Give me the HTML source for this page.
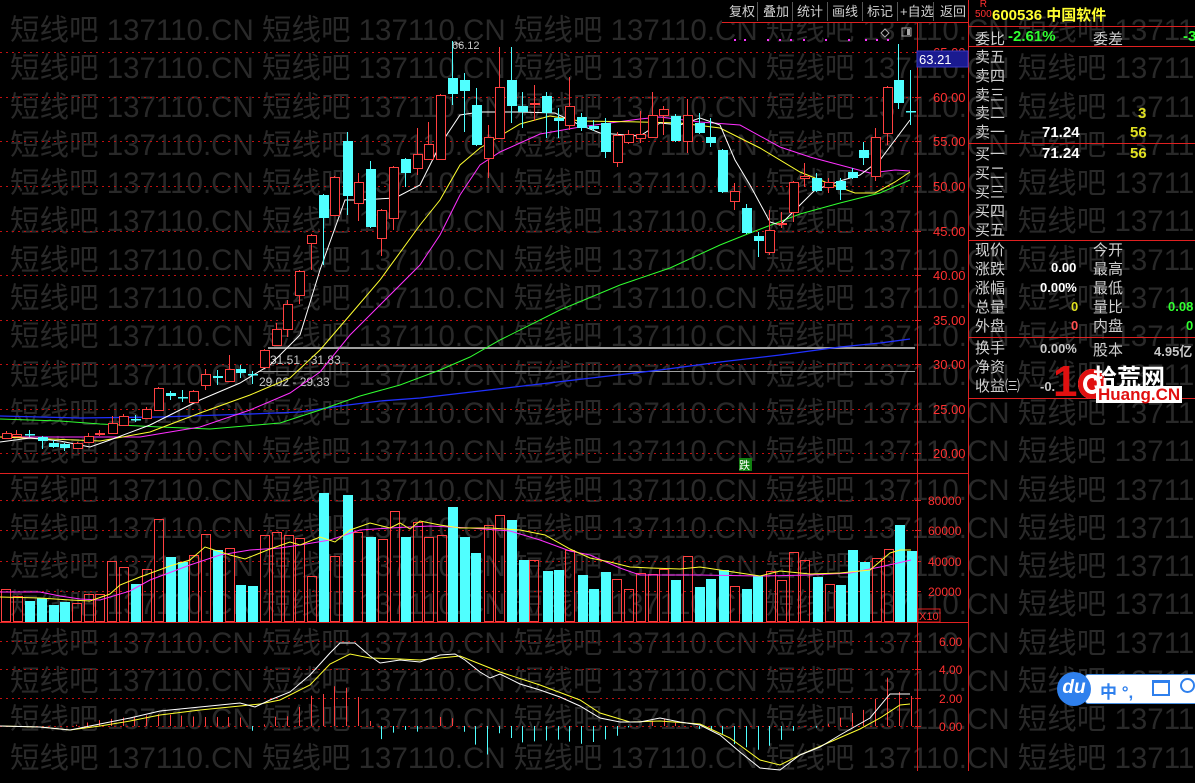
<!DOCTYPE html>
<html><head><meta charset="utf-8"><style>
html,body{margin:0;padding:0;background:#000;width:1195px;height:771px;overflow:hidden;font-family:"Liberation Sans","Noto Sans CJK SC",sans-serif}
#wm{position:absolute;left:0;top:0;width:1195px;height:771px;overflow:hidden;color:#292929;font-family:"Liberation Sans","Noto Sans CJK SC",sans-serif;font-size:29.5px;white-space:nowrap;line-height:38.3px}
#wm div{height:38.3px;padding-left:10px}
svg{position:absolute;left:0;top:0}
.rp{position:absolute;font-size:15px;color:#d0d0d0;white-space:nowrap}
.b{font-weight:bold}
</style></head><body>
<div id="wm"></div>
<svg id="s" width="1195" height="771" xmlns="http://www.w3.org/2000/svg" font-family="Liberation Sans, Noto Sans CJK SC, sans-serif"></svg>
<div class="rp" style="left:975px;top:0px;color:#ff3030;font-size:10px;line-height:10px;text-align:center">R<br>500</div>
<div class="rp b" style="left:992px;top:4px;color:#ffff30;font-size:15px">600536 中国软件</div>
<div class="rp" style="left:975px;top:28px">委比</div><div class="rp b" style="left:1008px;top:28px;color:#30ff30">-2.61%</div><div class="rp" style="left:1093px;top:28px">委差</div><div class="rp b" style="left:1183px;top:28px;color:#30ff30">-3</div>
<div class="rp" style="left:975px;top:49px;line-height:18.8px">卖五<br>卖四<br>卖三<br>卖二<br>卖一</div>
<div class="rp b" style="left:1138px;top:105px;color:#e0e020">3</div>
<div class="rp b" style="left:1042px;top:124px;color:#fff">71.24</div><div class="rp b" style="left:1130px;top:124px;color:#e0e020">56</div>
<div class="rp" style="left:975px;top:145px;line-height:19px">买一<br>买二<br>买三<br>买四<br>买五</div>
<div class="rp b" style="left:1042px;top:145px;color:#fff">71.24</div><div class="rp b" style="left:1130px;top:145px;color:#e0e020">56</div>
<div class="rp" style="left:975px;top:241px;line-height:19px">现价<br>涨跌<br>涨幅<br>总量<br>外盘</div>
<div class="rp" style="left:1093px;top:241px;line-height:19px">今开<br>最高<br>最低<br>量比<br>内盘</div>
<div class="rp b" style="left:1051px;top:260px;color:#fff;font-size:13px">0.00</div>
<div class="rp b" style="left:1040px;top:280px;color:#fff;font-size:13px">0.00%</div>
<div class="rp b" style="left:1071px;top:299px;color:#e0e020;font-size:13px">0</div>
<div class="rp b" style="left:1071px;top:318px;color:#ff5050;font-size:13px">0</div>
<div class="rp b" style="left:1168px;top:299px;color:#30ff30;font-size:13px">0.08</div>
<div class="rp b" style="left:1186px;top:318px;color:#30ff30;font-size:13px">0</div>
<div class="rp" style="left:975px;top:339px;line-height:19px">换手<br>净资<br>收益㈢</div>
<div class="rp" style="left:1093px;top:339px">股本</div>
<div class="rp b" style="left:1040px;top:341px;color:#c8c8c8;font-size:13px">0.00%</div>
<div class="rp b" style="left:1154px;top:341px;color:#c8c8c8;font-size:13px">4.95亿</div>
<div class="rp b" style="left:1040px;top:379px;color:#c8c8c8;font-size:13px">-0.</div>
<!-- logo -->
<div class="rp" style="left:1053px;top:360px;font-size:44px;line-height:44px;font-weight:bold;color:#e01010;letter-spacing:-4px">1<span style="display:inline-block;width:28px;height:30px;border-radius:50%;background:#e01010;vertical-align:-3px;margin-left:5px;box-shadow:inset 0 0 0 5px #e01010,inset 0 0 0 9px #fff"></span></div>
<div class="rp" style="left:1093px;top:358px;font-size:24px;color:#fff;font-weight:bold">拾荒网</div>
<div class="rp" style="left:1096px;top:386px;font-size:17px;color:#e01010;font-weight:bold;background:#fff;padding:0 2px;line-height:17px">Huang.CN</div>
<!-- du toolbar -->
<div style="position:absolute;left:1085px;top:674px;width:115px;height:28px;background:#fff;border:1px solid #4a90e2;border-radius:3px"></div>
<div style="position:absolute;left:1057px;top:672px;width:34px;height:34px;border-radius:50%;background:#2f80ed;color:#fff;font-style:italic;font-weight:bold;font-size:19px;line-height:32px;text-align:center">du</div>
<div class="rp b" style="left:1100px;top:678px;color:#2f80ed;font-size:17px">中 °,</div>
<div class="rp" style="left:1152px;top:680px;width:14px;height:11px;border:2px solid #2f80ed;border-top-width:3px"></div>
<div class="rp" style="left:1180px;top:678px;width:11px;height:11px;border:2px solid #2f80ed;border-radius:50%"></div>
<script>
var s=document.getElementById('s'),h='';
var wm='';for(var r=0;r<21;r++){wm+='<div>'+'短线吧 137110.CN '.repeat(6)+'</div>';}
var w=document.getElementById('wm');w.innerHTML=wm;w.style.top='12px';w.firstChild.style.marginTop='-38.3px';
function L(x1,y1,x2,y2,c,d,sw){h+='<line x1="'+x1+'" y1="'+y1+'" x2="'+x2+'" y2="'+y2+'" stroke="'+c+'" stroke-width="'+(sw||1)+'"'+(d?' stroke-dasharray="'+d+'"':'')+'/>';}
function T(x,y,t,c,fs,a){h+='<text x="'+x+'" y="'+y+'" fill="'+c+'" font-size="'+(fs||13)+'"'+(a?' text-anchor="'+a+'"':'')+'>'+t+'</text>';}
function P(pts,c,sw){h+='<polyline fill="none" stroke="'+c+'" stroke-width="'+(sw||1)+'" points="'+pts.map(function(p){return p.join(',')}).join(' ')+'"/>';}
var R='#e02020';
// grid price
[52,97,141,186,231,275,320,364,409,453].forEach(function(y){L(0,y+.5,915,y+.5,'#c01010','2,4');L(915,y+.5,921,y+.5,R);});
var pl=[[52,'65.00'],[97,'60.00'],[141,'55.00'],[186,'50.00'],[231,'45.00'],[275,'40.00'],[320,'35.00'],[364,'30.00'],[409,'25.00'],[453,'20.00']];
pl.forEach(function(p){T(933,p[0]+5,p[1],'#ff3030',13);});
[500,530,561,591].forEach(function(y,i){L(0,y+.5,915,y+.5,'#c01010','2,4');T(928,y+5,['80000','60000','40000','20000'][i],'#ff3030',12);L(915,y+.5,921,y+.5,R);});
[641,669,698,726].forEach(function(y,i){L(0,y+.5,915,y+.5,'#c01010','2,4');T(939,y+5,['6.00','4.00','2.00','0.00'][i],'#ff3030',12);L(915,y+.5,921,y+.5,R);});
// toolbar
h+='<rect x="722" y="0" width="246" height="22" fill="#000"/>';
var tb=[['复权',729],['叠加',763],['统计',797],['画线',832],['标记',867],['+自选',900],['返回',940]];
tb.forEach(function(t){T(t[1],16,t[0],'#d0d0d0',13);});
[757,792,827,862,897,933].forEach(function(x){L(x+.5,2,x+.5,21,'#555');});
L(722,22.5,968,22.5,R);
// panel borders
L(917.5,22,917.5,771,R);L(968.5,0,968.5,771,R);L(0,473.5,968,473.5,R);L(0,622.5,968,622.5,R);
L(968,26.5,1195,26.5,R);L(968,46.5,1195,46.5,R);L(968,143.5,1195,143.5,R);L(968,240.5,1195,240.5,R);L(968,337.5,1195,337.5,R);L(968,398.5,1195,398.5,R);
h+='<rect x="917" y="51" width="51" height="16" fill="#1a1a90" stroke="#3a3ac0"/>';T(919,64,'63.21','#fff',13);
h+='<rect x="918" y="609" width="22" height="13" fill="none" stroke="'+R+'"/>';T(919,620,'X10','#ff3030',11);
h+='<rect x="739" y="458" width="13" height="13" fill="#108010"/>';T(739,469,'跌','#fff',11);
[735,745,768,780,791,804,826,849,866,877,888].forEach(function(x){h+='<rect x="'+(x-1)+'" y="39" width="2" height="2" fill="#ff30ff"/>';});
h+='<path d="M885 29 l4 4 -4 4 -4 -4z" fill="none" stroke="#aaa"/><rect x="902" y="28" width="9" height="8" fill="none" stroke="#aaa"/><rect x="907" y="29" width="3" height="6" fill="#aaa"/>';
// ref lines
L(268,348,915,348,'#a0a0a0',null,2);L(258,371.5,915,371.5,'#a0a0a0');
T(270,364,'31.51 - 31.83','#c8c8c8',12);T(259,386,'29.02 - 29.33','#c8c8c8',12);
// MAs
P([[0,416],[80,418],[160,417],[250,414],[300,412],[340,406],[380,401],[420,398],[480,391],[540,384],[600,377],[660,370],[720,362],[780,355],[840,347],[880,343],[910,339]],'#2030ff',1.3);
P([[0,419],[60,421],[100,424],[160,427],[210,429],[280,423],[320,410],[360,396],[400,385],[440,370],[470,357],[500,340],[560,310],[620,285],[670,268],[720,245],[750,233],[800,214],[840,203],[880,193],[910,180]],'#30ff30');
P([[0,437],[140,437],[200,427],[250,410],[290,393],[320,372],[350,335],[380,305],[420,265],[440,235],[460,195],[480,165],[500,152],[540,134],[580,127],[640,119],[660,117],[700,122],[740,125],[780,147],[810,157],[840,165],[870,173],[895,170],[910,171]],'#ff30ff');
P([[0,437],[100,441],[150,432],[200,413],[250,395],[290,378],[320,350],[350,315],[380,280],[420,225],[440,200],[460,165],[480,148],[520,124],[550,116],[580,121],[640,122],[680,123],[720,128],[760,148],[800,172],[825,182],[855,193],[875,193],[895,182],[910,172]],'#ffff30');
P([[0,442],[30,438],[60,441],[90,447],[110,440],[150,425],[170,415],[200,400],[240,383],[270,365],[300,335],[320,270],[345,200],[360,200],[395,198],[420,185],[440,145],[460,115],[480,112],[520,112],[555,113],[580,125],[600,133],[640,136],[660,123],[680,125],[700,118],[720,125],[735,160],[750,185],[770,222],[780,225],[800,205],[815,190],[840,181],[860,175],[880,160],[895,140],[910,120]],'#ffffff');
// candles [x,top,bot,hi,lo,red]
var C=[[6,433,438,431,439,1],[16,434,436,430,437,1],[29,434,435,430,437,0],[42,437,441,436,449,0],[53,443,447,440,448,0],[64,444,448,443,451,0],[77,443,448,442,449,1],[88,436,442,433,443,1],[99,433,434,430,436,1],[112,423,433,416,434,1],[123,416,425,414,426,1],[135,419,420,415,422,0],[146,409,418,407,419,1],[158,388,410,387,411,1],[170,393,396,391,400,0],[182,397,398,390,402,0],[193,391,402,390,403,1],[205,374,385,369,390,1],[217,376,378,370,385,0],[229,369,381,355,382,1],[240,369,373,365,378,0],[252,374,375,371,384,0],[264,350,367,349,368,1],[276,329,345,323,346,1],[287,304,329,300,337,1],[299,271,295,270,304,1],[311,235,243,234,270,1],[323,195,218,194,265,0],[334,177,215,176,216,1],[347,141,196,132,215,0],[358,182,203,173,221,1],[370,169,227,161,228,0],[381,210,238,209,256,1],[393,167,218,166,230,1],[405,159,173,158,187,0],[417,154,168,128,175,1],[428,144,159,122,160,1],[440,95,159,94,160,1],
[452,78,94,41,105,0],[464,80,91,73,132,0],[476,105,145,88,146,0],[488,137,158,125,178,1],[499,87,138,47,139,1],[511,80,106,47,123,0],[522,106,112,92,128,0],[534,103,104,85,121,1],[546,96,113,92,138,0],[558,118,121,108,138,0],[569,106,125,77,130,1],[581,117,128,113,131,0],[593,126,129,120,131,0],[605,123,152,118,158,0],[617,135,162,132,167,1],[628,134,142,130,144,1],[640,134,138,111,143,1],[652,115,137,92,138,1],[663,109,115,106,135,1],[675,116,141,114,142,0],[687,115,141,99,153,1],[699,123,133,113,134,0],[710,137,143,118,147,0],[722,150,192,149,193,0],[734,191,201,183,210,1],[746,208,233,204,234,0],[758,236,241,232,257,0],[769,230,252,210,255,1],[781,223,224,212,228,1],[793,182,212,181,222,1],[804,176,178,163,187,1],[816,178,191,173,192,0],[828,182,187,178,193,1],[840,181,190,178,200,0],[852,172,178,168,179,0],[863,150,158,142,165,0],[875,137,176,128,181,1],[887,87,133,86,145,1],[898,80,103,44,109,0],[910,111,112,70,125,0]];
C.forEach(function(c){var x=c[0],col=c[5]?'#ff4040':'#50ffff';L(x+.5,c[3],x+.5,c[4],col);
 if(c[5]){h+='<rect x="'+(x-4)+'.5" y="'+(c[1]+.5)+'" width="9" height="'+Math.max(c[2]-c[1],1)+'" fill="#000" stroke="'+col+'"/>';}
 else h+='<rect x="'+(x-4)+'" y="'+c[1]+'" width="10" height="'+Math.max(c[2]-c[1],1.5)+'" fill="'+col+'"/>';});
T(452,49,'66.12','#c8c8c8',11);L(455,43,462,45,'#c8c8c8');
// volume
var V=[[5,589,1],[17,596,1],[29,601,0],[41,598,0],[53,605,0],[64,602,0],[76,603,1],[88,594,1],[99,594,1],[111,561,1],[123,567,1],[135,584,0],[146,569,1],[158,519,1],[170,557,0],[182,562,0],[193,555,1],[205,534,1],[217,550,0],[229,548,1],[240,585,0],[252,586,0],[264,535,1],[276,532,1],[288,535,1],[299,538,1],[311,576,1],[323,493,0],[334,556,1],[347,495,0],[357,532,1],[370,537,0],[382,539,1],[394,511,1],[405,537,0],[417,522,1],[428,537,1],[441,535,1],[452,507,0],[464,537,0],[475,553,0],[488,525,1],[499,515,1],[511,520,0],[523,560,0],[533,560,1],[547,571,0],[558,570,0],[569,550,1],[582,575,0],[593,589,0],[605,572,0],[616,579,1],[628,589,1],[640,573,1],[652,574,1],[663,569,1],[675,580,0],[687,556,1],[699,587,0],[710,579,0],[723,570,0],[734,586,1],[746,589,0],[757,576,0],[770,571,1],[781,580,1],[793,552,1],[804,560,1],[817,577,0],[829,584,1],[840,585,0],[852,550,0],[864,562,0],[876,558,1],[888,549,1],[899,525,0],[911,551,0]];
V.forEach(function(v){var x=v[0];if(v[2])h+='<rect x="'+(x-4)+'.5" y="'+(v[1]+.5)+'" width="9" height="'+(621-v[1])+'" fill="none" stroke="#ff4040"/>';else h+='<rect x="'+(x-4)+'" y="'+v[1]+'" width="10" height="'+(622-v[1])+'" fill="#50ffff"/>';});
P([[0,592],[40,592],[60,596],[80,599],[100,600],[130,591],[150,580],[190,565],[220,555],[250,550],[280,548],[300,545],[330,540],[360,530],[390,528],[430,526],[470,528],[510,531],[540,540],[570,551],[590,555],[620,568],[640,575],[700,575],[760,576],[810,575],[850,573],[880,567],[911,560]],'#ff30ff');
P([[0,597],[40,598],[70,600],[90,601],[110,594],[120,585],[140,577],[170,566],[190,560],[205,547],[230,555],[245,559],[270,549],[290,542],[300,545],[320,537],[335,542],[350,530],[370,523],[390,528],[400,523],[410,529],[420,521],[440,525],[460,528],[490,528],[520,530],[545,535],[570,549],[590,558],[610,562],[630,567],[650,568],[680,569],[700,567],[740,573],[760,576],[780,571],[810,574],[840,573],[870,570],[890,553],[900,550],[911,550]],'#ffff30');
// MACD
var DIF=[[0,726],[40,727],[70,730],[100,724],[130,718],[160,711],[180,709],[210,706],[240,703],[255,707],[270,700],[290,692],[310,675],[330,653],[340,643],[355,643],[370,656],[380,663],[400,660],[420,662],[440,655],[455,654],[465,660],[480,672],[490,678],[500,674],[520,684],[540,690],[560,697],[580,706],[600,718],[620,722],[640,722],[660,718],[680,722],[700,725],[720,735],[740,752],[760,768],[780,770],[800,755],[820,747],[840,735],[870,718],[890,694],[910,694]];
var DEA=[[0,726],[40,727],[70,730],[100,726],[130,721],[160,715],[200,710],[240,706],[260,704],[280,700],[310,685],[330,664],[350,654],[370,658],[400,659],[420,660],[440,658],[460,656],[480,664],[500,672],[540,685],[580,700],[600,713],[630,722],[660,721],[700,724],[730,738],[760,760],[780,765],[800,755],[830,742],[860,729],[880,718],[900,705],[910,704]];
function ip(a,x){for(var i=1;i<a.length;i++){if(x<=a[i][0]){var t=(x-a[i-1][0])/(a[i][0]-a[i-1][0]);return a[i-1][1]+t*(a[i][1]-a[i-1][1]);}}return a[a.length-1][1];}
for(var i=0;i<78;i++){var x=Math.round(5+i*11.76)+.5;var d=(ip(DEA,x)-ip(DIF,x))*3;if(Math.abs(d)<1)continue;var y2=Math.max(645,Math.min(771,726-d));L(x,726,x,y2,d>0?'#ff4040':'#50ffff');}
P(DEA,'#ffff30');P(DIF,'#ffffff');
s.innerHTML=h;
</script>
</body></html>
